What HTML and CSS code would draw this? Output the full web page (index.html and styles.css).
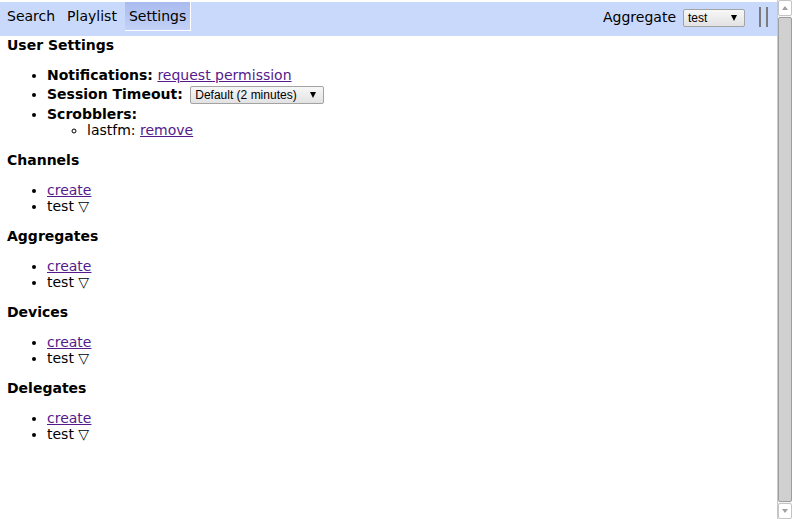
FILE: index.html
```html
<!DOCTYPE html>
<html lang="en">
<head>
<meta charset="utf-8">
<title>Settings</title>
<link rel="stylesheet" href="styles.css">
</head>
<body>
<div class="window">
  <div class="page">
    <header class="topbar">
      <nav class="tabs">
        <a class="tab" href="#search">Search</a>
        <a class="tab" href="#playlist">Playlist</a>
        <a class="tab active" href="#settings">Settings</a>
      </nav>
      <div class="tools">
        <span class="tools-label">Aggregate</span>
        <span class="dropdown dropdown-aggregate"><span class="dropdown-value">test</span><span class="dropdown-arrow"></span></span>
        <svg class="handle" width="10" height="20" viewBox="0 0 10 20" aria-hidden="true">
          <rect x="0" y="0" width="2" height="20" fill="#7b7b7b"/>
          <rect x="7" y="0" width="2" height="20" fill="#7b7b7b"/>
        </svg>
      </div>
    </header>

    <main class="content">
      <h4>User Settings</h4>
      <ul>
        <li><b>Notifications:</b> <a href="#notify">request permission</a></li>
        <li><b>Session Timeout:</b> <span class="dropdown dropdown-timeout"><span class="dropdown-value">Default (2 minutes)</span><span class="dropdown-arrow"></span></span></li>
        <li><b>Scrobblers:</b>
          <ul>
            <li>lastfm: <a href="#remove">remove</a></li>
          </ul>
        </li>
      </ul>

      <h4>Channels</h4>
      <ul>
        <li><a href="#create-channel">create</a></li>
        <li>test ▽</li>
      </ul>

      <h4>Aggregates</h4>
      <ul>
        <li><a href="#create-aggregate">create</a></li>
        <li>test ▽</li>
      </ul>

      <h4>Devices</h4>
      <ul>
        <li><a href="#create-device">create</a></li>
        <li>test ▽</li>
      </ul>

      <h4>Delegates</h4>
      <ul>
        <li><a href="#create-delegate">create</a></li>
        <li>test ▽</li>
      </ul>
    </main>
  </div>

  <div class="scrollbar">
    <div class="sb-button sb-up"><span class="sb-arrow-up"></span></div>
    <div class="sb-thumb"></div>
    <div class="sb-button sb-down"><span class="sb-arrow-down"></span></div>
  </div>
</div>
</body>
</html>
```

FILE: styles.css
```css
html, body {
  margin: 0;
  padding: 0;
}

body {
  font-family: "DejaVu Sans", Verdana, sans-serif;
  font-size: 14px;
  color: #000;
  background: #fff;
}

.window {
  display: flex;
  height: 519px;
  overflow: hidden;
}

.page {
  flex: 1;
  min-width: 0;
  padding-top: 2px;
}

/* top navigation bar */
.topbar {
  display: flex;
  justify-content: space-between;
  align-items: flex-start;
  height: 34px;
  padding: 0 8px 0 3px;
  background: #c9d9fb;
}

.tabs {
  display: flex;
  gap: 3px;
}

.tab {
  height: 28px;
  line-height: 28px;
  padding: 0 4px;
  color: #000;
  text-decoration: none;
  border-right: 1px solid transparent;
  border-bottom: 1px solid transparent;
}

.tab.active {
  background: linear-gradient(#a9bbef, #c2d1f6);
  border-color: #fff;
}

.tools {
  display: flex;
  align-items: center;
  height: 30px;
}

.tools-label {
  margin-right: 7px;
}

.handle {
  margin-left: 14px;
}

/* drop-down pickers */
.dropdown {
  display: inline-flex;
  align-items: center;
  justify-content: space-between;
  box-sizing: border-box;
  height: 18px;
  padding: 0 7px 0 4px;
  border: 1px solid #a3a3a3;
  border-radius: 2px;
  background: linear-gradient(#f7f7f7, #e2e2e2);
  font: 12px "Liberation Sans", Arial, sans-serif;
  color: #000;
}

.dropdown-aggregate {
  width: 62px;
  margin-top: 1px;
}

.dropdown-timeout {
  width: 134px;
  margin: 2.5px 0 2.5px 3px;
  vertical-align: middle;
}

.dropdown-arrow {
  width: 0;
  height: 0;
  border-left: 3.5px solid transparent;
  border-right: 3.5px solid transparent;
  border-top: 6px solid #000;
}

/* settings content */
.content {
  padding: 1px 7px 0;
}

.content h4 {
  font-size: 14px;
  font-weight: bold;
  margin: 14px 0;
}

.content h4:first-child {
  margin-top: 0;
}

.content ul {
  margin: 14px 0;
  padding-left: 40px;
}

.content ul ul {
  margin: 0;
  list-style: circle;
}

.content a {
  color: #551a8b;
}

/* vertical scrollbar */
.scrollbar {
  display: flex;
  flex-direction: column;
  width: 15px;
  background: #f4f4f4;
  border-left: 1px solid #c8c8c8;
  box-sizing: border-box;
}

.sb-button {
  height: 16px;
  flex: none;
  display: flex;
  align-items: center;
  justify-content: center;
  background: #fff;
  border: 1px solid #c4c4c4;
  border-radius: 2px;
  box-sizing: border-box;
}

.sb-thumb {
  flex: 1;
  margin: 1px 0;
  background: #d0d0d0;
  border: 1px solid #9d9d9d;
  border-radius: 2px;
}

.sb-arrow-up {
  width: 0;
  height: 0;
  border-left: 3.5px solid transparent;
  border-right: 3.5px solid transparent;
  border-bottom: 4px solid #a0a0a0;
}

.sb-arrow-down {
  width: 0;
  height: 0;
  border-left: 3.5px solid transparent;
  border-right: 3.5px solid transparent;
  border-top: 4px solid #a0a0a0;
}
```
